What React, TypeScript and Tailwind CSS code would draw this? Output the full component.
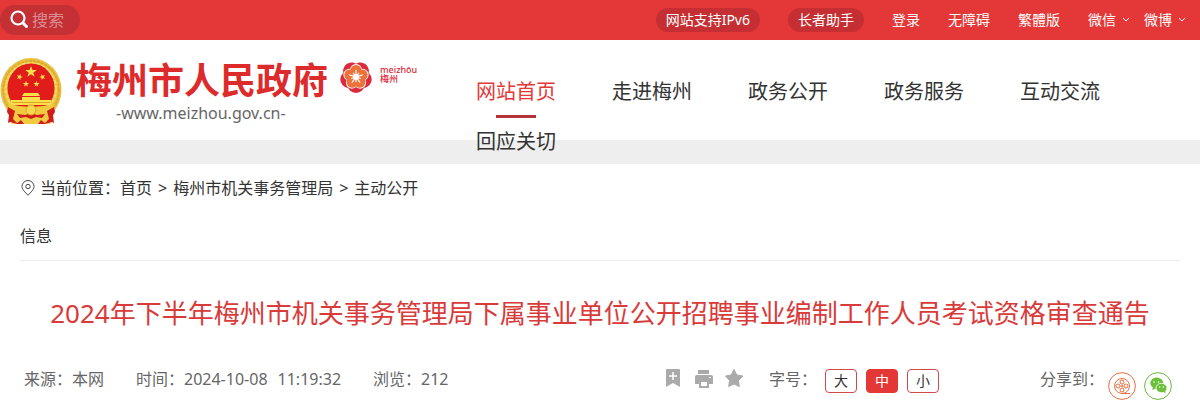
import { useState } from 'react';

const navItems = ['网站首页', '走进梅州', '政务公开', '政务服务', '互动交流', '回应关切'];
const sizes = ['大', '中', '小'];
const petals = [0, 72, 144, 216, 288];

function Chevron() {
    return (
        <svg className="h-2 w-2" viewBox="0 0 8 8" fill="none" stroke="currentColor">
            <path d="M1 2l3 3 3-3" />
        </svg>
    );
}

function Emblem() {
    const star = 'M0-5L1.2-1.6H4.8L1.9.6 3 4 0 1.9-3 4-1.9.6-4.8-1.6H-1.2Z';
    return (
        <svg className="h-[68px] w-[62px] shrink-0" viewBox="0 0 62 68">
            <ellipse cx="31" cy="33" rx="30.5" ry="32" fill="#e9c043" />
            <ellipse cx="31" cy="33" rx="28" ry="29" fill="none" stroke="#dcab2c" strokeWidth="2" strokeDasharray="3 1" />
            <ellipse cx="31" cy="32" rx="25" ry="26" fill="none" stroke="#f6dc62" strokeWidth="2" strokeDasharray="4 1" />
            <ellipse cx="31" cy="31" rx="23.5" ry="24.5" fill="#e01d1a" />
            <g fill="#fbe04a">
                <path d={star} transform="translate(31 15) scale(1.2)" />
                <path d={star} transform="translate(19.5 20) rotate(20) scale(.65)" />
                <path d={star} transform="translate(42.500 20) rotate(-20) scale(.65)" />
                <path d={star} transform="translate(26 27) scale(.65)" />
                <path d={star} transform="translate(36.500 27) scale(.65)" />
                <path d="M24 36h14l2 3H22zM22 40h18v3H22zM11 43h40v5H11z" />
            </g>
            <path d="M12 45.500h38" stroke="#dca22a" />
            <path d="M9 47q22 6 44 0l2 6-5 14H12L7 53z" fill="#f0cb40" />
            <path d="M8 50l7 4-2 8 5 5-8-2-2 1 1-8-2-3zM54 50l-7 4 2 8-5 5 8-2 2 1-1-8 2-3z" fill="#d11c1c" />
            <path d="M17 57l8 1 6-2 6 2 8-1-3 4-6-1-5 2-5-2-6 1z" fill="#d11c1c" />
            <circle cx="31" cy="53" r="5" fill="#f6d94c" stroke="#e0a62a" />
            <path d="M16 67l5-4 3 4zM46 67l-5-4-3 4z" fill="#d11c1c" />
        </svg>
    );
}

function PlumLogo() {
    return (
        <svg className="h-8 w-8" viewBox="-16 -16 32 32">
            {petals.map((a) => (
                <circle key={a} cx="0" cy="-7.500" r="8.500" fill="#dc2a3c" transform={`rotate(${a + 36})`} />
            ))}
            {petals.map((a) => (
                <circle key={a} cx="0" cy="-7" r="6" fill="#fff" transform={`rotate(${a})`} />
            ))}
            {petals.map((a) => (
                <circle key={a} cx="0" cy="-6.500" r="5.500" fill="#ec7239" transform={`rotate(${a})`} />
            ))}
            <circle r="3" fill="#fff" />
            {petals.map((a) => (
                <g key={a} stroke="#fff" strokeWidth="1.2">
                    <path d="M0 0V-7" transform={`rotate(${a})`} />
                    <path d="M0 0V-5" transform={`rotate(${a + 36})`} />
                </g>
            ))}
        </svg>
    );
}

export default function App() {
    const [size, setSize] = useState('中');

    return (
        <div className="bg-white font-['Noto_Sans','Noto_Sans_CJK_SC',sans-serif] text-base text-[#333]">
            <div className="flex h-10 items-center justify-between bg-[#e43737] text-sm text-white">
                <form className="flex h-[30px] w-20 items-center rounded-full bg-[#c43034] pl-2">
                    <svg className="h-6 w-6 shrink-0" viewBox="0 0 24 24" fill="none" stroke="#fff">
                        <circle cx="10" cy="10" r="6.500" strokeWidth="2.200" />
                        <path d="M15 15l3.500 3.500" strokeWidth="3" strokeLinecap="round" />
                    </svg>
                    <input
                        type="text"
                        aria-label="搜索"
                        placeholder="搜索"
                        className="w-10 min-w-0 bg-transparent text-base text-white outline-none placeholder:text-[#d98f92]"
                    />
                </form>
                <div className="flex items-center gap-7 pr-3.5">
                    <a href="#" className="h-6 rounded-xl bg-[#c52f33] px-2.5 leading-6">网站支持IPv6</a>
                    <a href="#" className="h-6 rounded-xl bg-[#c52f33] px-2.5 leading-6">长者助手</a>
                    <a href="#">登录</a>
                    <a href="#">无障碍</a>
                    <a href="#">繁體版</a>
                    <div className="flex gap-3.5">
                        <button type="button" className="flex items-center gap-1.5">微信<Chevron /></button>
                        <button type="button" className="flex items-center gap-1.5">微博<Chevron /></button>
                    </div>
                </div>
            </div>

            <header className="relative flex h-[100px] items-start">
                <a href="#" className="flex w-[448px] shrink-0 pt-[17px]">
                    <Emblem />
                    <div className="pl-3.5 pt-1">
                        <div className="flex items-start">
                            <span className="text-4xl font-bold text-[#dd2b2b]">梅州市人民政府</span>
                            <span className="flex gap-2 pl-3 text-[#dc2a3c]">
                                <PlumLogo />
                                <span className="pt-1 text-[9px] font-medium leading-[9px]">
                                    <span className="block">meizhōu</span>
                                    <span className="block">梅州</span>
                                </span>
                            </span>
                        </div>
                        <div className="pl-10 text-base text-[#666]">-www.meizhou.gov.cn-</div>
                    </div>
                </a>
                <nav className="flex flex-1 flex-wrap pt-[27px]">
                    {navItems.map((item, i) => (
                        <a
                            key={item}
                            href="#"
                            className={
                                i === 0
                                    ? 'relative px-7 text-xl leading-[50px] text-[#e43737] after:absolute after:left-12 after:top-12 after:h-[3px] after:w-10 after:bg-[#b5323a]'
                                    : 'px-7 text-xl leading-[50px]'
                            }
                        >
                            {item}
                        </a>
                    ))}
                </nav>
            </header>
            <div className="h-6 bg-[#eee]" />

            <main className="px-5">
                <div className="border-b border-[#eee]">
                    <div className="flex w-[35%] flex-wrap items-center leading-[48px]">
                        <svg className="mr-1 h-4 w-4" viewBox="0 0 16 16" fill="none" stroke="#444">
                            <path d="M8 15.300C5 12 2 9.500 2 6.500a6 6 0 0 1 12 0C14 9.500 11 12 8 15.300z" />
                            <circle cx="8" cy="6.500" r="2.200" />
                        </svg>
                        <span>当前位置：</span>
                        <a href="#">首页</a>
                        <span className="mx-1.5">&gt;</span>
                        <a href="#">梅州市机关事务管理局</a>
                        <span className="mx-1.5">&gt;</span>
                        <a href="#" className="contents">
                            <span>主动公开</span>
                            <span>信息</span>
                        </a>
                    </div>
                </div>
                <h1 className="pt-8 text-center text-[26px] leading-10 text-[#d93a3a]">
                    2024年下半年梅州市机关事务管理局下属事业单位公开招聘事业编制工作人员考试资格审查通告
                </h1>
                <div className="flex items-start justify-between pl-1 pr-2 pt-8 text-[#666]">
                    <div className="flex gap-8 leading-7">
                        <span>来源：本网</span>
                        <span>时间：2024-10-08<span className="ml-2.5">11:19:32</span></span>
                        <span>浏览：212</span>
                    </div>
                    <div className="flex items-start">
                        <div className="flex gap-3 pr-6 pt-1 text-[#aaa]">
                            <button type="button" aria-label="收藏">
                                <svg className="h-5 w-[18px]" viewBox="0 0 18 20">
                                    <path d="M2 0h12q1 0 1 1v17l-7-4-7 4V1q0-1 1-1z" fill="currentColor" />
                                    <path d="M8 3v8M4 7h8" stroke="#fff" strokeWidth="1.500" />
                                </svg>
                            </button>
                            <button type="button" aria-label="打印">
                                <svg className="h-5 w-[18px]" viewBox="0 0 18 20" fill="currentColor">
                                    <path d="M3 1h11v4H3z" />
                                    <path d="M2 6h14q2 0 2 2v7h-4v-4H4v4H0V8q0-2 2-2z" />
                                    <path d="M5 12h8v6H5z" fill="#fff" stroke="currentColor" strokeWidth="2" />
                                    <path d="M14 8h2v1h-2z" fill="#fff" />
                                </svg>
                            </button>
                            <button type="button" aria-label="星标">
                                <svg className="h-5 w-5" viewBox="0 0 20 20" fill="currentColor" stroke="currentColor" strokeLinejoin="round">
                                    <path d="M9 .5l2.800 5.500 6 1-4.300 4.500.8 6L9 15l-5.300 2.500.8-6L.5 7l5.700-1z" />
                                </svg>
                            </button>
                        </div>
                        <span className="leading-7">字号：</span>
                        <div className="flex gap-2 pl-2 pt-1">
                            {sizes.map((s) => (
                                <button
                                    key={s}
                                    type="button"
                                    onClick={() => setSize(s)}
                                    className={
                                        s === size
                                            ? 'mr-px h-6 w-8 rounded border border-[#e43737] bg-[#e43737] text-sm leading-5 text-white'
                                            : 'mr-px h-6 w-8 rounded border border-[#d04a4a] text-sm leading-5 text-[#333]'
                                    }
                                >
                                    {s}
                                </button>
                            ))}
                        </div>
                        <span className="pl-[100px] leading-7">分享到：</span>
                        <div className="flex gap-2 pl-1 pt-[7px]">
                            <a href="#" aria-label="分享到视频号">
                                <svg className="h-7 w-7" viewBox="0 0 28 28" fill="none" stroke="#e6703f">
                                    <circle cx="14" cy="14" r="13.400" />
                                    <circle cx="14" cy="14" r="7.500" />
                                    <circle cx="14" cy="10" r="2" />
                                    <circle cx="14" cy="18" r="2" />
                                    <circle cx="10" cy="14" r="2" />
                                    <circle cx="18" cy="14" r="2" />
                                    <circle cx="14" cy="14" r="1" />
                                    <path d="M14 21.500h8" />
                                </svg>
                            </a>
                            <a href="#" aria-label="分享到微信">
                                <svg className="h-7 w-7" viewBox="0 0 28 28">
                                    <circle cx="14" cy="14" r="13.400" fill="none" stroke="#6cb83c" />
                                    <path d="M8 18l1-2.500a6.500 5.500 0 1 1 3 1z" fill="#6cbf3a" />
                                    <ellipse cx="17.500" cy="16" rx="5.500" ry="4.700" fill="#6cbf3a" stroke="#fff" strokeWidth=".8" />
                                    <path d="M19 19.500l2.500 2-.3-3z" fill="#6cbf3a" />
                                    <g fill="#fff">
                                        <circle cx="10" cy="10" r=".8" />
                                        <circle cx="14.500" cy="10" r=".8" />
                                        <circle cx="15.700" cy="15" r=".7" />
                                        <circle cx="19.300" cy="15" r=".7" />
                                    </g>
                                </svg>
                            </a>
                        </div>
                    </div>
                </div>
            </main>
        </div>
    );
}
